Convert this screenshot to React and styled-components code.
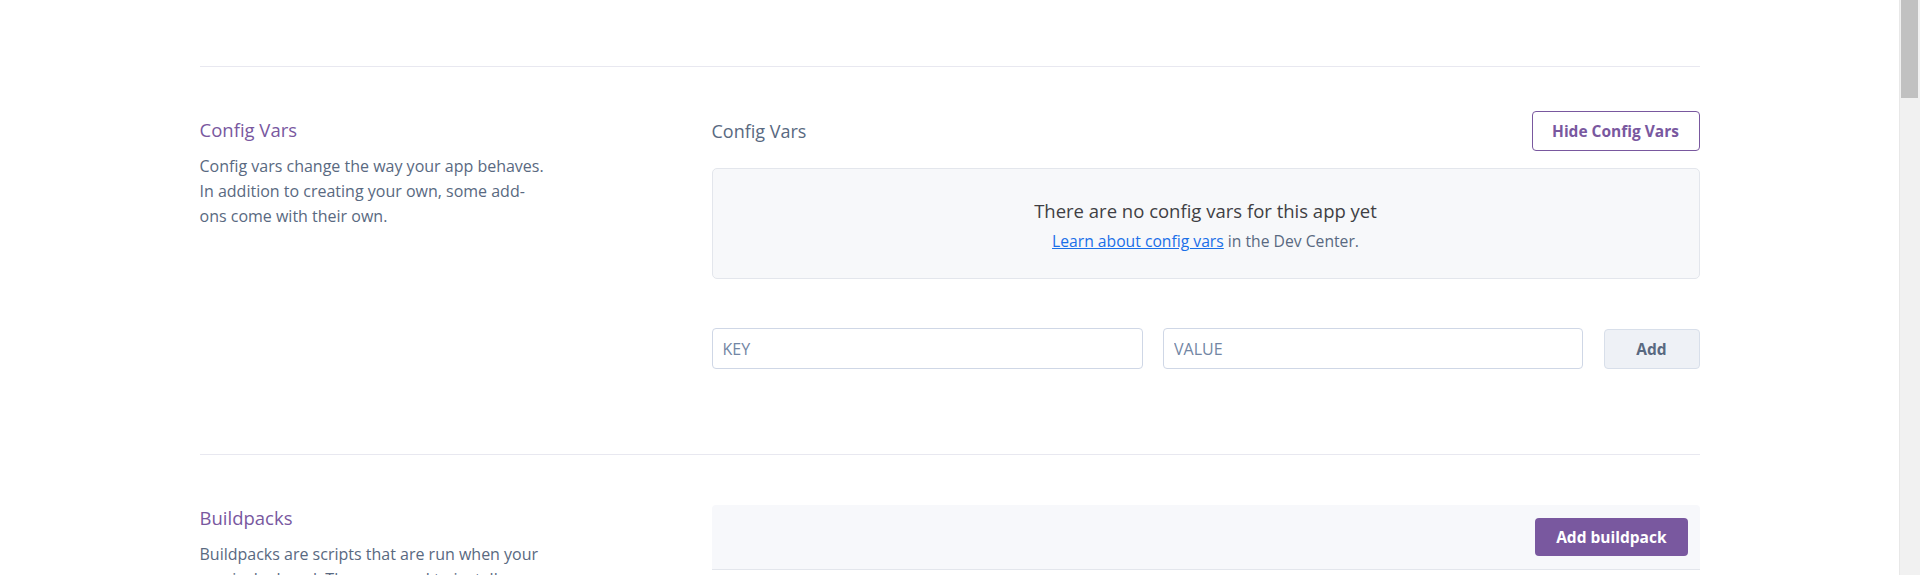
import styled, { createGlobalStyle } from 'styled-components';

const GlobalStyle = createGlobalStyle`
    html, body {
        margin: 0;
        padding: 0;
        background: #ffffff;
        overflow: hidden;
    }
    body {
        font-family: "Open Sans", Lato, sans-serif;
        color: #596981;
    }
`;

function ConfigVarsSection () {
    return (
        <Section>
            <Aside>
                <AsideTitle>Config Vars</AsideTitle>
                <AsideText>
                    Config vars change the way your app behaves. In addition to creating your own, some add-ons come with their own.
                </AsideText>
            </Aside>
            <Main>
                <MainHeader>
                    <MainTitle>Config Vars</MainTitle>
                    <OutlineButton>Hide Config Vars</OutlineButton>
                </MainHeader>
                <EmptyBox>
                    <EmptyTitle>There are no config vars for this app yet</EmptyTitle>
                    <EmptyText>
                        <a href="#config">Learn about config vars</a> in the Dev Center.
                    </EmptyText>
                </EmptyBox>
                <AddRow>
                    <Field placeholder="KEY" />
                    <Field placeholder="VALUE" />
                    <GrayButton>Add</GrayButton>
                </AddRow>
            </Main>
        </Section>
    );
}

function BuildpacksSection () {
    return (
        <Section>
            <Aside>
                <AsideTitle>Buildpacks</AsideTitle>
                <AsideText>
                    Buildpacks are scripts that are run when your app is deployed. They are used to install dependencies for your app and configure your environment.
                </AsideText>
            </Aside>
            <Main>
                <PanelHeader>
                    <PurpleButton>Add buildpack</PurpleButton>
                </PanelHeader>
            </Main>
        </Section>
    );
}

export default function App () {
    return (
        <>
            <GlobalStyle />
            <Page>
                <Container>
                    <ConfigVarsSection />
                    <BuildpacksSection />
                </Container>
            </Page>
            <ScrollTrack>
                <ScrollThumb />
            </ScrollTrack>
        </>
    );
}

const Page = styled.div`
    width: 1899px;
    padding-top: 66px;
`;

const Container = styled.div`
    width: 1500px;
    margin: 0 auto;
`;

const Section = styled.section`
    display: grid;
    grid-template-columns: 512px 1fr;
    border-top: 1px solid #e8e8f0;
    padding: 50px 0 85px;
`;

const Aside = styled.div`
    display: flex;
    flex-direction: column;
`;

const AsideTitle = styled.h2`
    margin: 0;
    font-size: 18.5px;
    font-weight: 400;
    line-height: 26px;
    color: #79589f;
`;

const AsideText = styled.p`
    margin: 11px 0 0;
    max-width: 350px;
    font-size: 16px;
    line-height: 25px;
    color: #596981;
`;

const Main = styled.div`
    display: flex;
    flex-direction: column;
`;

const MainHeader = styled.div`
    display: flex;
    justify-content: space-between;
    align-items: center;
    margin-top: -6px;
`;

const MainTitle = styled.h3`
    margin: 0;
    font-size: 18px;
    font-weight: 400;
    color: #596981;
`;

const OutlineButton = styled.button`
    width: 168px;
    height: 40px;
    padding: 0;
    border: 1px solid #79589f;
    border-radius: 4px;
    background: #ffffff;
    color: #79589f;
    font-family: inherit;
    font-size: 15.5px;
    font-weight: 700;
`;

const EmptyBox = styled.div`
    margin-top: 17px;
    padding: 28px 0 26px;
    border: 1px solid #e3e6ec;
    border-radius: 5px;
    background: #f7f8fa;
    text-align: center;
`;

const EmptyTitle = styled.div`
    font-size: 18.5px;
    line-height: 28px;
    color: #3f3f44;
`;

const EmptyText = styled.div`
    margin-top: 5px;
    font-size: 15.7px;
    line-height: 22px;
    color: #596981;

    > a {
        color: #1a6fe8;
        text-decoration: underline;
    }
`;

const AddRow = styled.div`
    display: grid;
    grid-template-columns: 431px 420px 96px;
    justify-content: space-between;
    margin-top: 49px;
`;

const Field = styled.input`
    height: 41px;
    box-sizing: border-box;
    padding: 0 10px;
    border: 1px solid #cfd7e6;
    border-radius: 4px;
    font-family: inherit;
    font-size: 16px;
    color: #3f3f44;
    outline: none;

    &::placeholder {
        color: #7286a4;
    }
`;

const GrayButton = styled.button`
    height: 40px;
    margin-top: 1px;
    border: 1px solid #d8dfea;
    border-radius: 4px;
    background: #eef1f6;
    color: #596981;
    font-family: inherit;
    font-size: 15.5px;
    font-weight: 700;
`;

const PanelHeader = styled.div`
    display: flex;
    justify-content: flex-end;
    padding: 13px 12px 13px;
    background: #f7f8fb;
    border-bottom: 1px solid #e3e6ec;
    border-radius: 4px 4px 0 0;
`;

const PurpleButton = styled.button`
    height: 38px;
    padding: 0 21px;
    border: none;
    border-radius: 4px;
    background: #79589f;
    color: #ffffff;
    font-family: inherit;
    font-size: 15.5px;
    font-weight: 700;
`;

const ScrollTrack = styled.div`
    position: fixed;
    top: 0;
    right: 0;
    bottom: 0;
    width: 21px;
    background: #f1f1f1;
    border-left: 1px solid #e8e8e8;
    box-sizing: border-box;
`;

const ScrollThumb = styled.div`
    margin: 0 2px 0 1px;
    height: 98px;
    background: #c1c1c1;
`;
